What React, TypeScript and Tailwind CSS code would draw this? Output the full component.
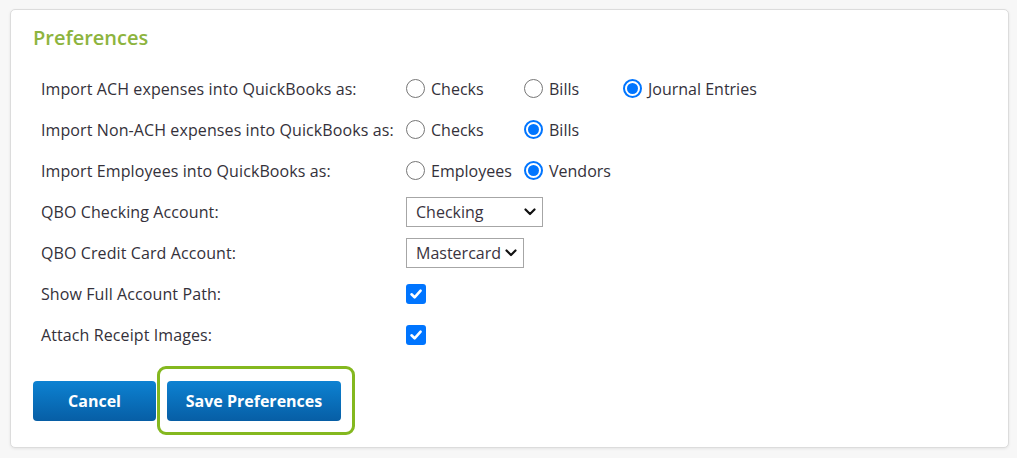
import React, { useState } from 'react';

const font = { fontFamily: '"Open Sans", "Noto Sans", sans-serif' };

const Radio: React.FC<{ checked: boolean; label: string; onClick: () => void }> = ({ checked, label, onClick }) => (
  <label className="flex items-center gap-[6px] cursor-pointer" onClick={onClick}>
    {checked ? (
      <span className="w-[19px] h-[19px] rounded-full border-2 border-[#0075ff] bg-white flex items-center justify-center">
        <span className="w-[11px] h-[11px] rounded-full bg-[#0075ff]" />
      </span>
    ) : (
      <span className="w-[19px] h-[19px] rounded-full border border-[#767676] bg-white" />
    )}
    <span>{label}</span>
  </label>
);

const Checkbox: React.FC<{ checked: boolean; onClick: () => void }> = ({ checked, onClick }) => (
  <span
    onClick={onClick}
    className={
      checked
        ? 'w-[20px] h-[20px] rounded-[3px] bg-[#0075ff] flex items-center justify-center cursor-pointer'
        : 'w-[20px] h-[20px] rounded-[3px] border border-[#767676] bg-white cursor-pointer'
    }
  >
    {checked && (
      <svg width="14" height="14" viewBox="0 0 14 14">
        <path d="M2.5 7.3 L5.6 10.3 L11.6 3.6" fill="none" stroke="white" strokeWidth="2.6" strokeLinecap="round" strokeLinejoin="round" />
      </svg>
    )}
  </span>
);

const Select: React.FC<{ value: string; width: string }> = ({ value, width }) => (
  <div className={`${width} h-[30px] border border-[#a6a6a6] bg-white flex items-center justify-between pl-[9px] pr-[6px]`}>
    <span className="text-[#3a3340]">{value}</span>
    <svg width="12" height="8" viewBox="0 0 12 8">
      <path d="M1.5 1.5 L6 6 L10.5 1.5" fill="none" stroke="#111" strokeWidth="2.2" strokeLinecap="round" strokeLinejoin="round" />
    </svg>
  </div>
);

export default function App() {
  const [ach, setAch] = useState('journal');
  const [nonAch, setNonAch] = useState('bills');
  const [emp, setEmp] = useState('vendors');
  const [fullPath, setFullPath] = useState(true);
  const [receipts, setReceipts] = useState(true);

  const rows: { label: string; control: React.ReactNode }[] = [
    {
      label: 'Import ACH expenses into QuickBooks as:',
      control: (
        <div className="grid grid-cols-[118px_99px_auto] items-center">
          <Radio checked={ach === 'checks'} label="Checks" onClick={() => setAch('checks')} />
          <Radio checked={ach === 'bills'} label="Bills" onClick={() => setAch('bills')} />
          <Radio checked={ach === 'journal'} label="Journal Entries" onClick={() => setAch('journal')} />
        </div>
      ),
    },
    {
      label: 'Import Non-ACH expenses into QuickBooks as:',
      control: (
        <div className="grid grid-cols-[118px_99px_auto] items-center">
          <Radio checked={nonAch === 'checks'} label="Checks" onClick={() => setNonAch('checks')} />
          <Radio checked={nonAch === 'bills'} label="Bills" onClick={() => setNonAch('bills')} />
        </div>
      ),
    },
    {
      label: 'Import Employees into QuickBooks as:',
      control: (
        <div className="grid grid-cols-[118px_99px_auto] items-center">
          <Radio checked={emp === 'employees'} label="Employees" onClick={() => setEmp('employees')} />
          <Radio checked={emp === 'vendors'} label="Vendors" onClick={() => setEmp('vendors')} />
        </div>
      ),
    },
    { label: 'QBO Checking Account:', control: <Select value="Checking" width="w-[137px]" /> },
    { label: 'QBO Credit Card Account:', control: <Select value="Mastercard" width="w-[118px]" /> },
    { label: 'Show Full Account Path:', control: <Checkbox checked={fullPath} onClick={() => setFullPath(!fullPath)} /> },
    { label: 'Attach Receipt Images:', control: <Checkbox checked={receipts} onClick={() => setReceipts(!receipts)} /> },
  ];

  return (
    <div className="min-h-screen bg-[#f7f7f7] pt-[9px] pl-[10px] pr-[8px] pb-[10px]" style={font}>
      <div className="h-[439px] bg-white border border-[#dcdcdc] rounded-[5px] shadow-[0_1px_3px_rgba(0,0,0,0.08)] pt-[14px] pl-[22px]">
        <h2 className="text-[20px] leading-[27px] font-semibold text-[#8db43e]">Preferences</h2>

        <div className="mt-[17px] pl-[8px] text-[16px] tracking-[0.1px] text-[#34313a]">
          {rows.map((r) => (
            <div key={r.label} className="grid grid-cols-[365px_auto] items-center h-[41px]">
              <div>{r.label}</div>
              <div className="flex items-center tracking-normal">{r.control}</div>
            </div>
          ))}
        </div>

        <div className="mt-[26px] flex items-center gap-[11px]">
          <button className="w-[123px] h-[40px] rounded-[4px] bg-gradient-to-b from-[#0d82d2] to-[#075ea5] text-white font-bold text-[16px]">
            Cancel
          </button>
          <div className="relative">
            <button className="w-[174px] h-[40px] rounded-[4px] bg-gradient-to-b from-[#0d82d2] to-[#075ea5] text-white font-bold text-[16px]">
              Save Preferences
            </button>
            <div className="absolute -left-[10px] -right-[14px] -top-[15px] -bottom-[14px] border-[3px] border-[#84b81f] rounded-[9px] pointer-events-none" />
          </div>
        </div>
      </div>
    </div>
  );
}
